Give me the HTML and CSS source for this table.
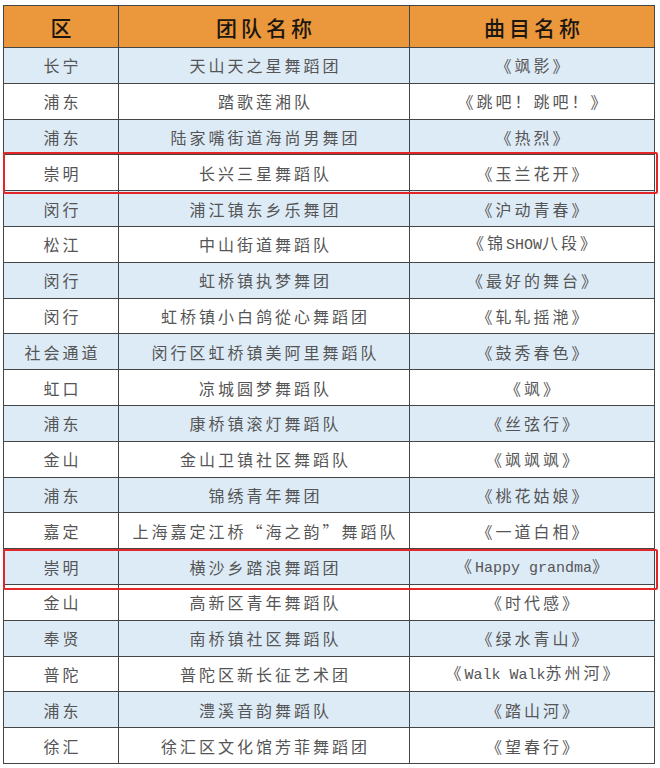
FILE: index.html
```html
<!DOCTYPE html>
<html lang="zh">
<head>
<meta charset="utf-8">
<link rel="stylesheet" href="styles.css">
</head>
<body>
<div class="sheet">
<table class="grid">
  <colgroup><col class="c1"><col class="c2"><col class="c3"></colgroup>
  <thead>
    <tr><th>区</th><th>团队名称</th><th>曲目名称</th></tr>
  </thead>
  <tbody>
    <tr class="b"><td>长宁</td><td>天山天之星舞蹈团</td><td>《飒影》</td></tr>
    <tr><td>浦东</td><td>踏歌莲湘队</td><td>《跳吧！跳吧！》</td></tr>
    <tr class="b"><td>浦东</td><td>陆家嘴街道海尚男舞团</td><td>《热烈》</td></tr>
    <tr><td class="hl"><span class="mark m1"></span>崇明</td><td>长兴三星舞蹈队</td><td>《玉兰花开》</td></tr>
    <tr class="b"><td>闵行</td><td>浦江镇东乡乐舞团</td><td>《沪动青春》</td></tr>
    <tr><td>松江</td><td>中山街道舞蹈队</td><td>《锦<span class="lat">SHOW</span>八段》</td></tr>
    <tr class="b"><td>闵行</td><td>虹桥镇执梦舞团</td><td>《最好的舞台》</td></tr>
    <tr><td>闵行</td><td>虹桥镇小白鸽從心舞蹈团</td><td>《轧轧摇滟》</td></tr>
    <tr class="b"><td>社会通道</td><td>闵行区虹桥镇美阿里舞蹈队</td><td>《鼓秀春色》</td></tr>
    <tr><td>虹口</td><td>凉城圆梦舞蹈队</td><td>《飒》</td></tr>
    <tr class="b"><td>浦东</td><td>康桥镇滚灯舞蹈队</td><td>《丝弦行》</td></tr>
    <tr><td>金山</td><td>金山卫镇社区舞蹈队</td><td>《飒飒飒》</td></tr>
    <tr class="b"><td>浦东</td><td>锦绣青年舞团</td><td>《桃花姑娘》</td></tr>
    <tr><td>嘉定</td><td>上海嘉定江桥“海之韵”舞蹈队</td><td>《一道白相》</td></tr>
    <tr class="b"><td class="hl"><span class="mark m2"></span>崇明</td><td>横沙乡踏浪舞蹈团</td><td>《<span class="lat">Happy grandma</span>》</td></tr>
    <tr><td>金山</td><td>高新区青年舞蹈队</td><td>《时代感》</td></tr>
    <tr class="b"><td>奉贤</td><td>南桥镇社区舞蹈队</td><td>《绿水青山》</td></tr>
    <tr><td>普陀</td><td>普陀区新长征艺术团</td><td>《<span class="lat">Walk Walk</span>苏州河》</td></tr>
    <tr class="b"><td>浦东</td><td>澧溪音韵舞蹈队</td><td>《踏山河》</td></tr>
    <tr><td>徐汇</td><td>徐汇区文化馆芳菲舞蹈团</td><td>《望春行》</td></tr>
  </tbody>
</table>
</div>
</body>
</html>
```

FILE: styles.css
```css
html, body {
  margin: 0;
  padding: 0;
  background: #ffffff;
}

.sheet {
  padding: 5px 0 0 3px;
}

.grid {
  border-collapse: collapse;
  table-layout: fixed;
  width: 651px;
  font-family: "Noto Sans CJK SC", "Noto Sans", sans-serif;
}

.c1 { width: 115px; }
.c2 { width: 291px; }
.c3 { width: 245px; }

.grid th,
.grid td {
  border: 1px solid #454545;
  text-align: center;
  vertical-align: middle;
  padding: 0;
  white-space: nowrap;
}

.grid th {
  height: 41px;
  background: #ea983b;
  color: #1c1610;
  font-size: 21px;
  font-weight: 500;
  letter-spacing: 4px;
  text-indent: 4px;
}

.grid td {
  height: 34.8px;
  font-size: 16px;
  color: #555555;
  letter-spacing: 3px;
  text-indent: 3px;
  line-height: 20px;
}

.grid tr.b td {
  background: #ddebf7;
}

.lat {
  font-family: "Liberation Mono", monospace;
  font-size: 15px;
  letter-spacing: 0;
}

.hl {
  position: relative;
}

.mark {
  position: absolute;
  left: -1px;
  width: 651px;
  border: 2px solid #e2262a;
  border-radius: 2px;
  pointer-events: none;
}

.m1 {
  top: -3px;
  height: 38px;
}

.m2 {
  top: 0;
  height: 37px;
}
```
